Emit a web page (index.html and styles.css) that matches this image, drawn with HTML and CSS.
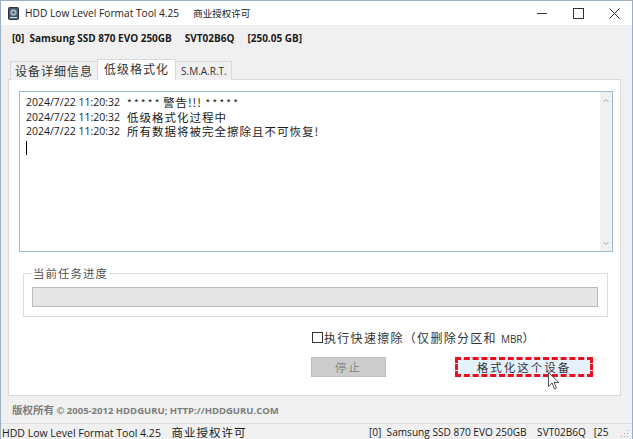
FILE: index.html
```html
<!DOCTYPE html>
<html lang="zh-CN">
<head>
  <meta charset="UTF-8">
  <title>HDD Low Level Format Tool 4.25</title>
  <link rel="stylesheet" href="styles.css">
</head>
<body>
  <div class="window">
    <!-- Title bar -->
    <div class="titlebar">
      <svg class="app-icon" width="11" height="13" viewBox="0 0 11 13">
        <rect x="0.5" y="0.5" width="10" height="12" rx="1" fill="#4a5866" stroke="#2b3540"/>
        <circle cx="5.5" cy="5.5" r="3.2" fill="#9fb3c4"/>
        <circle cx="5.5" cy="5.5" r="1" fill="#2b3540"/>
        <rect x="2" y="10" width="7" height="1.2" fill="#c8d3dc"/>
      </svg>
      <span class="title-text">HDD Low Level Format Tool 4.25</span>
      <span class="title-cjk">商业授权许可</span>
      <div class="controls">
        <svg width="36" height="24" viewBox="0 0 36 24"><path d="M13 12.5h10" stroke="#333" stroke-width="1"/></svg>
        <svg width="36" height="24" viewBox="0 0 36 24"><rect x="13.5" y="7.5" width="10" height="10" fill="none" stroke="#333"/></svg>
        <svg width="36" height="24" viewBox="0 0 36 24"><path d="M13.5 7.5l10 10M23.5 7.5l-10 10" stroke="#333"/></svg>
      </div>
    </div>

    <!-- Selected device -->
    <div class="device">[0]&nbsp; Samsung SSD 870 EVO 250GB &nbsp;&nbsp;&nbsp; SVT02B6Q &nbsp;&nbsp;&nbsp; [250.05 GB]</div>

    <!-- Tabs -->
    <div class="tabs">
      <div class="tab cjk">设备详细信息</div>
      <div class="tab active cjk">低级格式化</div>
      <div class="tab smart">S.M.A.R.T.</div>
    </div>

    <div class="panel">
      <!-- Log box -->
      <div class="log">
        <div class="log-lines">
          <div class="line"><span class="stamp">2024/7/22 11:20:32</span><span class="msg"><span class="stars">* * * * *</span> 警告!!! <span class="stars">* * * * *</span></span></div>
          <div class="line"><span class="stamp">2024/7/22 11:20:32</span><span class="msg">低级格式化过程中</span></div>
          <div class="line"><span class="stamp">2024/7/22 11:20:32</span><span class="msg">所有数据将被完全擦除且不可恢复!</span></div>
          <div class="caret"></div>
        </div>
        <div class="scrollbar">
          <svg width="12" height="12" viewBox="0 0 12 12"><path d="M3.5 7l2.5-2.5 2.5 2.5" fill="none" stroke="#a6a6a6"/></svg>
          <svg width="12" height="12" viewBox="0 0 12 12"><path d="M3.5 5l2.5 2.5 2.5-2.5" fill="none" stroke="#a6a6a6"/></svg>
        </div>
      </div>

      <!-- Progress group -->
      <fieldset class="progress-group">
        <legend class="cjk">当前任务进度</legend>
        <div class="progress"></div>
      </fieldset>

      <div class="options">
        <span class="checkbox"></span>
        <span class="cjk">执行快速擦除（仅删除分区和 <span class="latin">MBR</span>）</span>
      </div>

      <div class="buttons">
        <button class="btn stop cjk" disabled>停止</button>
        <button class="btn format cjk">格式化这个设备</button>
      </div>

      <svg class="cursor" width="12" height="18" viewBox="0 0 12 18">
        <path d="M0.5 0.5v14l3.5-3.5 2.5 6 2-1-2.5-5.5h5z" fill="#fff" stroke="#555"/>
      </svg>
    </div>

    <div class="copyright"><span class="cjk-bold">版权所有</span> © 2005-2012 HDDGURU; HTTP://HDDGURU.COM</div>

    <!-- Status bar -->
    <div class="statusbar">
      <div class="status-left">HDD Low Level Format Tool 4.25 <span class="title-cjk">商业授权许可</span></div>
      <div class="status-right">[0]&nbsp; Samsung SSD 870 EVO 250GB &nbsp;&nbsp; SVT02B6Q &nbsp;&nbsp;[25</div>
      <svg class="grip" width="8" height="8" viewBox="0 0 8 8">
        <rect x="6" y="0" width="1" height="1" fill="#aaa"/>
        <rect x="3" y="3" width="1" height="1" fill="#aaa"/>
        <rect x="6" y="3" width="1" height="1" fill="#aaa"/>
        <rect x="0" y="6" width="1" height="1" fill="#aaa"/>
        <rect x="3" y="6" width="1" height="1" fill="#aaa"/>
        <rect x="6" y="6" width="1" height="1" fill="#aaa"/>
      </svg>
    </div>
  </div>
</body>
</html>
```

FILE: styles.css
```css
/* Whole window */
body {
  margin: 0;
  font-family: "Open Sans", "Noto Sans CJK SC", sans-serif;
  font-size: 11px;
  color: #1a1a1a;
}

.window {
  width: 633px;
  height: 439px;
  box-sizing: border-box;
  border: 1px solid #9db0c0;
  border-bottom: none;
  background-color: #f0f0f0;
  display: flex;
  flex-direction: column;
  overflow: hidden;
}

.cjk {
  font-family: "Noto Sans CJK SC", sans-serif;
  letter-spacing: 1px;
}

.latin {
  font-family: "Open Sans", sans-serif;
  font-size: 10px;
  letter-spacing: 0;
}

/* Title bar */
.titlebar {
  height: 24px;
  background-color: #fff;
  display: flex;
  align-items: center;
  flex-shrink: 0;
}

.app-icon {
  margin-left: 7px;
  margin-right: 6px;
}

.title-text {
  font-size: 10.2px;
  color: #222;
}

.title-cjk {
  font-family: "Noto Sans CJK SC", sans-serif;
  font-size: 9.5px;
  margin-left: 14px;
}

.controls {
  margin-left: auto;
  display: flex;
}

/* Device line */
.device {
  font-weight: bold;
  font-size: 10px;
  padding: 6px 0 0 11px;
  height: 35px;
  box-sizing: border-box;
  flex-shrink: 0;
}

/* Tab strip */
.tabs {
  display: flex;
  align-items: flex-end;
  margin-left: 9px;
  height: 20px;
  margin-bottom: -1px;
  position: relative;
  z-index: 1;
  flex-shrink: 0;
}

.tab {
  height: 19px;
  box-sizing: border-box;
  border: 1px solid #d9d9d9;
  border-bottom: none;
  background-color: #f0f0f0;
  font-size: 12px;
  line-height: 17px;
  padding: 0 4px;
  color: #333;
}

.tab + .tab {
  margin-left: -1px;
}

.tab.active {
  height: 21px;
  background-color: #fff;
  padding: 0 6px;
  line-height: 18px;
}

.tab.smart {
  font-size: 10px;
  padding: 1px 5px 0;
  width: 57px;
}

/* Main tab panel */
.panel {
  position: relative;
  margin: 0 11px 0 7px;
  height: 317px;
  flex-shrink: 0;
  box-sizing: border-box;
  border: 1px solid #d9d9d9;
  background-color: #fff;
  padding: 11px 7px 0 10px;
}

.log {
  height: 161px;
  box-sizing: border-box;
  border: 1px solid #a3b7d1;
  display: flex;
}

.log-lines {
  flex: 1;
  padding: 3px 0 0 6px;
}

.line {
  height: 14.5px;
  display: flex;
  align-items: center;
  white-space: nowrap;
}

.stamp {
  width: 101px;
  font-size: 10.5px;
}

.msg {
  font-family: "Noto Sans CJK SC", sans-serif;
  font-size: 11.5px;
  letter-spacing: 1px;
}

.stars {
  font-size: 10px;
  letter-spacing: 0;
}

.caret {
  width: 1px;
  height: 14px;
  background-color: #000;
  margin-top: 2px;
}

.scrollbar {
  width: 12px;
  background-color: #f0f0f0;
  display: flex;
  flex-direction: column;
  justify-content: space-between;
  padding: 3px 0 2px;
}

/* Progress group box */
.progress-group {
  margin: 14px 5px 0 4px;
  padding: 7px 9px 7px 8px;
  border: 1px solid #dcdcdc;
  height: 51px;
  box-sizing: border-box;
}

.progress-group legend {
  font-size: 11.5px;
  color: #555;
  padding: 0 1px;
  margin-left: 0;
  line-height: 14px;
}

.progress {
  height: 20px;
  box-sizing: border-box;
  border: 1px solid #bcbcbc;
  background-color: #e6e6e6;
}

.options {
  display: flex;
  align-items: center;
  margin: 12px 0 0 293px;
  font-size: 12px;
  color: #333;
}

.options .cjk {
  letter-spacing: 1.3px;
}

.checkbox {
  width: 11px;
  height: 11px;
  box-sizing: border-box;
  border: 1px solid #333;
  background-color: #fff;
  margin-right: 1px;
}

.buttons {
  display: flex;
  margin: 11px 0 0 292px;
}

.btn {
  height: 20px;
  box-sizing: border-box;
  font-size: 11.5px;
  padding: 0;
  letter-spacing: 2px;
}

.stop {
  width: 75px;
  background-color: #cccccc;
  border: 1px solid #bfbfbf;
  color: #8a8a8a;
}

.format {
  width: 138px;
  margin-left: 69px;
  background-color: #e5f1fb;
  border: 3px dashed #e8101c;
  color: #333;
  line-height: 12px;
}

.cursor {
  position: absolute;
  left: 539px;
  top: 292px;
}

/* Copyright line */
.copyright {
  height: 27px;
  flex-shrink: 0;
  box-sizing: border-box;
  padding: 6px 0 0 11px;
  font-size: 9.5px;
  font-weight: bold;
  color: #7d7d7d;
}

.cjk-bold {
  font-family: "Noto Sans CJK SC", sans-serif;
  font-size: 10.5px;
}

/* Status bar */
.statusbar {
  flex: 1;
  border-top: 1px solid #dfdfdf;
  display: flex;
  align-items: center;
  font-size: 10.5px;
  white-space: nowrap;
}

.status-left {
  width: 367px;
  padding-left: 1px;
  flex-shrink: 0;
}

.status-left .title-cjk {
  font-size: 11.5px;
  margin-left: 8px;
  letter-spacing: 1px;
}

.status-right {
  flex: 1;
  font-size: 10.1px;
}

.grip {
  margin: 4px 3px 0 4px;
}
```
